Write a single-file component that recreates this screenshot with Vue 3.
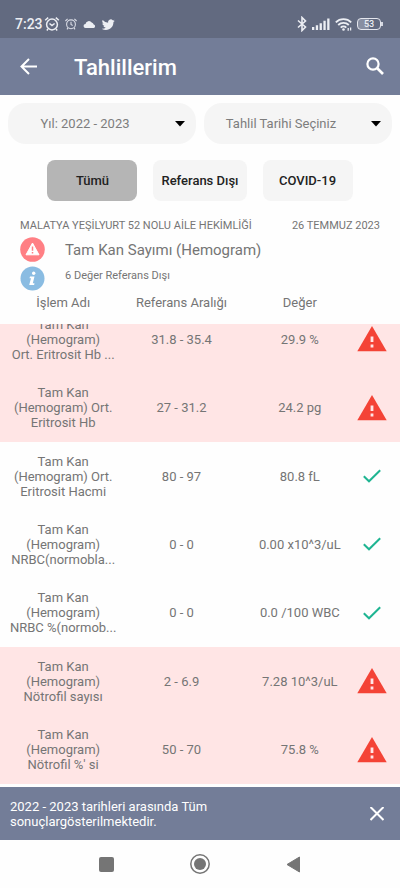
<script setup>
import { ref } from 'vue'

const year = ref('Yıl: 2022 - 2023')
const date = ref('Tahlil Tarihi Seçiniz')
const filters = ['Tümü', 'Referans Dışı', 'COVID-19']
const active = ref('Tümü')
const showNotice = ref(true)

const rows = [
  { name: 'Tam Kan\n(Hemogram)\nOrt. Eritrosit Hb ...', range: '31.8 - 35.4', value: '29.9 %', out: true },
  { name: 'Tam Kan\n(Hemogram) Ort.\nEritrosit Hb', range: '27 - 31.2', value: '24.2 pg', out: true },
  { name: 'Tam Kan\n(Hemogram) Ort.\nEritrosit Hacmi', range: '80 - 97', value: '80.8 fL', out: false },
  { name: 'Tam Kan\n(Hemogram)\nNRBC(normobla...', range: '0 - 0', value: '0.00 x10^3/uL', out: false },
  { name: 'Tam Kan\n(Hemogram)\nNRBC %(normob...', range: '0 - 0', value: '0.0 /100 WBC', out: false },
  { name: 'Tam Kan\n(Hemogram)\nNötrofil sayısı', range: '2 - 6.9', value: '7.28 10^3/uL', out: true },
  { name: "Tam Kan\n(Hemogram)\nNötrofil %' si", range: '50 - 70', value: '75.8 %', out: true }
]
</script>

<template>
  <div class="screen">
    <div class="status">
      <div class="status-left">
        <span class="clock">7:23</span>
        <svg width="16" height="16" viewBox="0 0 16 16" fill="none" stroke="#eceef3" stroke-width="1.5">
          <circle cx="8" cy="8.5" r="5.4" />
          <path d="M5.5 7.5 8 9.5l2.6-2M1.2 4.2l3-2.6M14.8 4.2l-3-2.6M4 13l-1.2 1.4M12 13l1.2 1.4" />
        </svg>
        <svg class="alarm" width="12" height="12" viewBox="0 0 12 12" fill="none" stroke="#d8dbe4" stroke-width="1.1">
          <circle cx="6" cy="6.3" r="4.4" />
          <path d="M6 3.8v2.7l1.7 1M.4 3l2.2-2.200M11.600 3l-2.200-2.200M3 9.800l-1 1.600M9 9.800l1 1.600" />
        </svg>
        <svg class="cloud" width="13" height="9" viewBox="0 0 13 9" fill="#eceef3">
          <path d="M2.600 8a2 2 0 0 1-.1-4A3.400 3.400 0 0 1 8.700 2.600a2.800 2.800 0 0 1 2 1.900 1.800 1.800 0 0 1 0 3.500z" />
        </svg>
        <svg class="bird" width="13" height="13" viewBox="0 0 24 24" fill="#eceef3">
          <path d="M23.6 4.9a9.6 9.6 0 0 1-2.8.8 4.9 4.9 0 0 0 2.1-2.7 9.8 9.8 0 0 1-3.1 1.2 4.9 4.9 0 0 0-8.4 4.5A14 14 0 0 1 1.300 3.500a4.900 4.900 0 0 0 1.500 6.600 4.900 4.900 0 0 1-2.200-.6v.1a4.900 4.900 0 0 0 3.900 4.800 4.900 4.900 0 0 1-2.200.1 4.900 4.900 0 0 0 4.600 3.400A9.900 9.900 0 0 1-.4 19.900a14 14 0 0 0 7.500 2.200c9.100 0 14.400-7.700 14-14.600a10 10 0 0 0 2.500-2.600z" />
        </svg>
      </div>
      <div class="status-right">
        <svg width="10" height="16" viewBox="0 0 10 16" fill="none" stroke="#eceef3" stroke-width="1.600">
          <path d="M1 4.500l7.500 6.500L5 14.500v-13L8.500 5 1 11.500" />
        </svg>
        <svg width="18" height="12" viewBox="0 0 18 12" fill="#eceef3">
          <path d="M0 9h2.300v3H0zM3.800 7.200h2.300V12H3.800zM7.600 5.200h2.300V12H7.600zM11.400 2.800h2.300V12h-2.300zM15.200.5h2.300V12h-2.300z" />
        </svg>
        <svg width="17" height="13" viewBox="0 0 17 13" fill="none" stroke="#eceef3" stroke-width="1.800">
          <path d="M.8 4.300a11 11 0 0 1 15.400 0M3.200 7a7.500 7.500 0 0 1 10.600 0M5.700 9.600a4 4 0 0 1 5.600 0" />
          <circle cx="8.500" cy="11.500" r="1.300" fill="#eceef3" stroke="none" />
          <path d="M13.200 12.800V10M15.600 12.500V9.500" stroke-width="1.300" />
        </svg>
        <span class="battery"><span class="cell">53</span></span>
      </div>
    </div>

    <header class="bar">
      <button class="icon-btn" aria-label="Geri">
        <svg width="18" height="18" viewBox="0 0 18 18" fill="none" stroke="#fff" stroke-width="2">
          <path d="M17 8.500H2M9 1 1.500 8.500 9 16" />
        </svg>
      </button>
      <h1>Tahlillerim</h1>
      <button class="icon-btn" aria-label="Ara">
        <svg width="20" height="20" viewBox="0 0 20 20" fill="none" stroke="#fff" stroke-width="2.200">
          <circle cx="8" cy="7" r="5.600" />
          <path d="M12 11l6 6" stroke-width="2.600" />
        </svg>
      </button>
    </header>

    <div class="selects">
      <div class="select">
        <select v-model="year" aria-label="Yıl">
          <option>Yıl: 2022 - 2023</option>
        </select>
        <svg class="caret" width="10" height="6" viewBox="0 0 10 6"><path d="M0 0h10L5 5.500z" /></svg>
      </div>
      <div class="select">
        <select v-model="date" aria-label="Tahlil Tarihi">
          <option>Tahlil Tarihi Seçiniz</option>
        </select>
        <svg class="caret" width="10" height="6" viewBox="0 0 10 6"><path d="M0 0h10L5 5.500z" /></svg>
      </div>
    </div>

    <div class="filters">
      <button v-for="f in filters" :key="f" :class="{ on: f === active }" @click="active = f">{{ f }}</button>
    </div>

    <section class="summary">
      <div class="place">
        <span>MALATYA YEŞİLYURT 52 NOLU AİLE HEKİMLİĞİ</span>
        <span>26 TEMMUZ 2023</span>
      </div>
      <div class="line">
        <svg width="25" height="25" viewBox="0 0 25 25">
          <circle cx="12.500" cy="12.500" r="12.300" fill="#ff7f84" />
          <path d="M12.500 6 19 17.800H6z" fill="#fff" stroke="#fff" stroke-linejoin="round" />
          <path d="M12.500 9.500v4.300M12.500 15v1.600" stroke="#ff7f84" stroke-width="1.500" />
        </svg>
        <h2>Tam Kan Sayımı (Hemogram)</h2>
      </div>
      <div class="line">
        <svg width="25" height="25" viewBox="0 0 25 25">
          <circle cx="12.500" cy="12.500" r="12" fill="#8abce2" />
          <circle cx="13.700" cy="7.200" r="1.700" fill="#fff" />
          <path d="M10 10.500h4.500l-1.700 6.700h1.700l-.4 1.700h-4.900l1.800-6.700H9.500z" fill="#fff" />
        </svg>
        <p>6 Değer Referans Dışı</p>
      </div>
    </section>

    <table>
      <thead>
        <tr>
          <th>İşlem Adı</th>
          <th>Referans Aralığı</th>
          <th>Değer</th>
          <td></td>
        </tr>
      </thead>
      <tbody>
        <tr v-for="r in rows" :key="r.name" :class="{ out: r.out }">
          <td>{{ r.name }}</td>
          <td>{{ r.range }}</td>
          <td>{{ r.value }}</td>
          <td>
            <svg v-if="r.out" width="30" height="26" viewBox="0 0 30 26">
              <path d="M15 0 29.700 25.300H.3z" fill="#f44336" />
              <path d="M15 10.500v5.500M15 18.500v3" stroke="#ffe6e6" stroke-width="2.800" />
            </svg>
            <svg v-else width="18" height="14" viewBox="0 0 18 14" fill="none" stroke="#1fb592" stroke-width="2">
              <path d="M.8 7.200 6 12.300 17.200 1.200" />
            </svg>
          </td>
        </tr>
      </tbody>
    </table>

    <div v-if="showNotice" class="notice">
      <p>2022 - 2023 tarihleri arasında Tüm sonuçlargösterilmektedir.</p>
      <button class="icon-btn" aria-label="Kapat" @click="showNotice = false">
        <svg width="14" height="14" viewBox="0 0 14 14" fill="none" stroke="#fff" stroke-width="2">
          <path d="M.5 0l13 13M13.500 0l-13 13" />
        </svg>
      </button>
    </div>

    <nav class="nav">
      <button class="icon-btn" aria-label="Son uygulamalar">
        <svg width="15" height="15" viewBox="0 0 15 15"><rect width="15" height="15" rx="2" fill="#757575" /></svg>
      </button>
      <button class="icon-btn" aria-label="Ana ekran">
        <svg width="20" height="20" viewBox="0 0 20 20">
          <circle cx="10" cy="10" r="9.200" fill="none" stroke="#757575" stroke-width="1.500" />
          <circle cx="10" cy="10" r="6" fill="#757575" />
        </svg>
      </button>
      <button class="icon-btn" aria-label="Geri">
        <svg width="15" height="17" viewBox="0 0 15 17">
          <path d="M13.500 1v15L1 8.500z" fill="#757575" stroke="#757575" stroke-linejoin="round" />
        </svg>
      </button>
    </nav>
  </div>
</template>

<style>
body {
  margin: 0;
  background: #fefefe;
}
</style>

<style scoped>
.screen {
  display: flex;
  flex-direction: column;
  min-height: 100vh;
  font-family: Roboto, "Liberation Sans", sans-serif;
  font-size: 13px;
  line-height: 15px;
  color: #757575;
}
h1, h2, p {
  margin: 0;
}
svg {
  display: block;
  flex: none;
}
button, select {
  font: inherit;
  border: 0;
}
.icon-btn {
  display: flex;
  padding: 0;
  background: none;
}
.status {
  display: flex;
  justify-content: space-between;
  height: 28px;
  padding: 10px 17px 0 15px;
  background: #626a80;
  color: #eceef3;
}
.status-left, .status-right {
  display: flex;
  align-items: center;
}
.clock {
  font-size: 14px;
  font-weight: 500;
  margin-right: 1px;
}
.alarm {
  margin-left: 5px;
}
.cloud {
  margin-left: 6px;
}
.bird {
  margin-left: 6px;
}
.status-right {
  gap: 5px;
}
.battery {
  display: flex;
  align-items: center;
}
.battery::after {
  content: "";
  width: 2px;
  height: 4px;
  background: #d5d8e1;
}
.cell {
  box-sizing: border-box;
  width: 24px;
  height: 12px;
  border: 1px solid #e4e6ed;
  border-radius: 4px;
  background: linear-gradient(90deg, #888fa2 50%, transparent 50%);
  font-size: 9px;
  font-weight: 500;
  line-height: 10px;
  text-align: center;
}
.bar {
  display: flex;
  align-items: center;
  height: 57px;
  padding: 0 15px 0 20px;
  background: #737d98;
  color: #fff;
}
h1 {
  flex: 1;
  margin-left: 36px;
  font-size: 22px;
  line-height: 30px;
  font-weight: 500;
  padding-top: 2px;
}
.selects {
  display: grid;
  grid-template-columns: 1fr 1fr;
  gap: 8px;
  padding: 8px 8px 0;
}
.select {
  position: relative;
}
select {
  display: block;
  width: 100%;
  height: 41px;
  padding: 0 34px 0 0;
  appearance: none;
  border-radius: 18px;
  background: #f5f5f5;
  color: #7d7d7d;
  text-align-last: center;
}
.caret {
  position: absolute;
  right: 11px;
  top: 18px;
  pointer-events: none;
}
.filters {
  display: flex;
  justify-content: center;
  gap: 16px;
  padding: 16px 0;
}
.filters button {
  min-width: 90px;
  height: 41px;
  padding: 0 8px;
  border-radius: 8px;
  background: #f5f5f5;
  color: #222;
  font-weight: 500;
}
.filters .on {
  background: #b5b5b5;
}
.summary {
  display: flex;
  flex-direction: column;
  gap: 4px;
  padding: 0 20px;
}
.place {
  display: flex;
  justify-content: space-between;
  margin-top: 1px;
  font-size: 11px;
}
.line {
  display: flex;
  align-items: center;
  gap: 20px;
}
h2 {
  font-size: 15px;
  line-height: 20px;
  font-weight: 400;
}
.line p {
  margin-bottom: 6px;
  font-size: 11px;
}
table {
  flex: 1;
  display: flex;
  flex-direction: column;
}
tr {
  display: grid;
  grid-template-columns: 1fr 1fr 1fr 26px;
  align-items: center;
  justify-items: center;
  padding: 0 15px 0 4px;
}
th, td {
  padding: 0;
  font-weight: 400;
  text-align: center;
  white-space: pre;
}
thead {
  position: relative;
  z-index: 1;
  background: #fefefe;
}
thead tr {
  height: 33px;
}
thead th {
  margin-bottom: 10px;
}
tbody {
  flex: 1;
  display: grid;
  grid-auto-rows: minmax(60px, 1fr);
  margin-top: -19px;
}
.out {
  background: #ffe5e5;
}
.notice {
  display: flex;
  align-items: center;
  justify-content: space-between;
  height: 53px;
  margin-top: 3px;
  padding: 0 16px 0 10px;
  background: #737d98;
  color: #fff;
}
.notice p {
  max-width: 210px;
}
.nav {
  display: flex;
  align-items: center;
  justify-content: center;
  gap: 76px;
  height: 48px;
}
</style>
